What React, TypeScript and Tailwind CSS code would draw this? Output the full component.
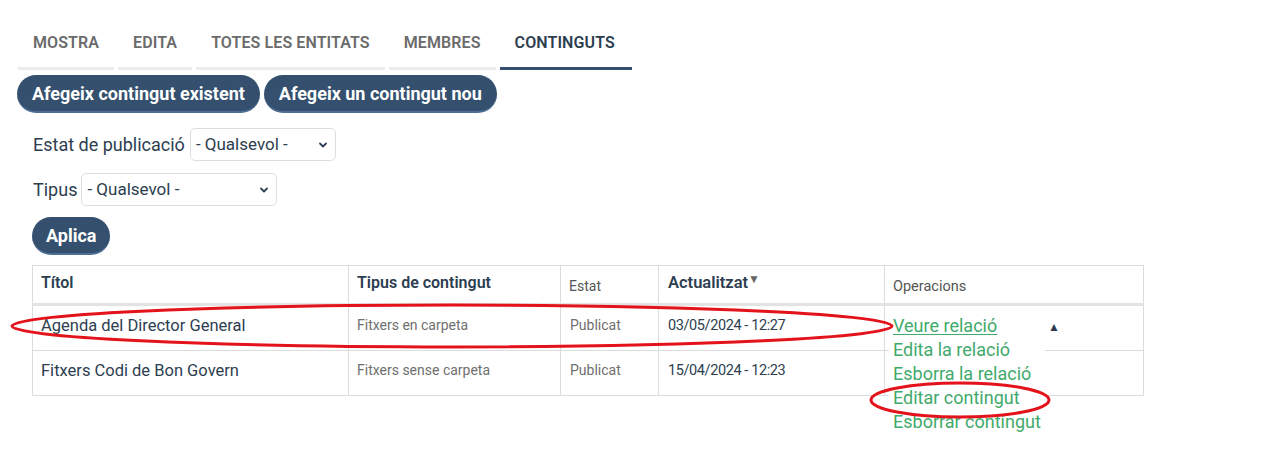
import React from "react";

const tabs = ["MOSTRA", "EDITA", "TOTES LES ENTITATS", "MEMBRES", "CONTINGUTS"];

function Chevron() {
  return (
    <svg width="10" height="10" viewBox="0 0 10 10" className="shrink-0">
      <path d="M2 3.5 L5 6.5 L8 3.5" fill="none" stroke="#2f3f55" strokeWidth="1.8" strokeLinecap="round" strokeLinejoin="round" />
    </svg>
  );
}

function Select({ w }: { w: string }) {
  return (
    <div className={`${w} h-[33px] flex items-center justify-between rounded-[5px] border border-[#dedede] bg-white pl-[5px] pr-[7px] text-[17px] text-[#2c3e50]`}>
      <span>- Qualsevol -</span>
      <Chevron />
    </div>
  );
}

export default function App() {
  return (
    <div className="relative w-[1269px] h-[470px] bg-white overflow-hidden font-['Roboto',sans-serif] text-[#2c3e50]">
      <ul className="flex gap-[4px] pl-[18px] pt-[20px]">
        {tabs.map((t, i) => (
          <li
            key={t}
            className={`px-[15px] pt-[13px] pb-[14px] leading-[20px] text-[16px] tracking-[0.1px] font-semibold border-b-[3px] ${
              i === 4 ? "border-[#34506e] text-[#2c3e50] pr-[17px]" : "border-[#ececec] text-[#6b6b6b]"
            }`}
          >
            {t}
          </li>
        ))}
      </ul>

      <div className="flex gap-[4px] pl-[17px] mt-[5px]">
        <button className="h-[38px] rounded-full bg-[#34506e] border-b-2 border-[#4d6e95] px-[15px] text-[18px] font-bold text-white">
          Afegeix contingut existent
        </button>
        <button className="h-[38px] rounded-full bg-[#34506e] border-b-2 border-[#4d6e95] px-[15px] text-[18px] font-bold text-white">
          Afegeix un contingut nou
        </button>
      </div>

      <div className="pl-[32px] pt-[15px]">
        <div className="flex items-center gap-[5px] text-[18px]">
          <span className="pl-[1px]">Estat de publicació</span>
          <Select w="w-[146px]" />
        </div>
        <div className="flex items-center gap-[4px] text-[18px] mt-[12px]">
          <span className="pl-[1px]">Tipus</span>
          <Select w="w-[196px]" />
        </div>
        <button className="mt-[11px] h-[38px] rounded-full bg-[#34506e] border-b-2 border-[#4d6e95] px-[14px] text-[18px] font-bold text-white">
          Aplica
        </button>

        <table className="mt-[10px] border-collapse border border-[#dcdcdc] text-left">
          <colgroup>
            <col className="w-[316px]" />
            <col className="w-[212px]" />
            <col className="w-[98px]" />
            <col className="w-[226px]" />
            <col className="w-[259px]" />
          </colgroup>
          <thead>
            <tr className="h-[39px] border-b-[3px] border-[#e3e3e3]">
              <th className="border-r border-[#dcdcdc] pl-[8px] pb-[3px] text-[16px] font-semibold">Títol</th>
              <th className="border-r border-[#dcdcdc] pl-[8px] pb-[3px] text-[16px] font-semibold">Tipus de contingut</th>
              <th className="border-r border-[#dcdcdc] pl-[8px] pt-[4px] text-[14px] font-normal text-[#555]">Estat</th>
              <th className="border-r border-[#dcdcdc] pl-[9px] pb-[3px] text-[16.5px] font-semibold">
                Actualitzat<span className="text-[12px] text-[#666] align-top relative top-[-1px]">▼</span>
              </th>
              <th className="pl-[8px] pt-[4px] text-[14.5px] font-normal text-[#555]">Operacions</th>
            </tr>
          </thead>
          <tbody>
            <tr className="h-[46px] border-b border-[#dcdcdc]">
              <td className="border-r border-[#dcdcdc] pl-[8px] text-[16.5px] align-top pt-[8px]">Agenda del Director General</td>
              <td className="border-r border-[#dcdcdc] pl-[8px] text-[14px] text-[#6f6f6f] align-top pt-[9px]">Fitxers en carpeta</td>
              <td className="border-r border-[#dcdcdc] pl-[9px] text-[14px] text-[#6f6f6f] align-top pt-[9px]">Publicat</td>
              <td className="border-r border-[#dcdcdc] pl-[9px] text-[14.5px] tracking-[-0.4px] align-top pt-[9px]">03/05/2024 - 12:27</td>
              <td className="relative pl-[8px] align-top pt-[8px] text-[18px] leading-[24px] text-[#3faa6b]">
                <span className="underline underline-offset-2 decoration-1">Veure relació</span>
                <span className="absolute left-[163px] top-[13px] text-[12px] leading-[16px] text-[#2c3e50]">▲</span>
                <ul className="absolute left-[4px] top-[32px] w-max bg-white pl-[4px] pr-[4px] leading-[24px] z-10">
                  <li>Edita la relació</li>
                  <li>Esborra la relació</li>
                  <li>Editar contingut</li>
                  <li>Esborrar contingut</li>
                </ul>
              </td>
            </tr>
            <tr className="h-[45px]">
              <td className="border-r border-[#dcdcdc] pl-[8px] text-[16.5px] align-top pt-[8px]">Fitxers Codi de Bon Govern</td>
              <td className="border-r border-[#dcdcdc] pl-[8px] text-[14px] text-[#6f6f6f] align-top pt-[9px]">Fitxers sense carpeta</td>
              <td className="border-r border-[#dcdcdc] pl-[9px] text-[14px] text-[#6f6f6f] align-top pt-[9px]">Publicat</td>
              <td className="border-r border-[#dcdcdc] pl-[9px] text-[14.5px] tracking-[-0.4px] align-top pt-[9px]">15/04/2024 - 12:23</td>
              <td></td>
            </tr>
          </tbody>
        </table>
      </div>

      <svg className="absolute inset-0 pointer-events-none z-20" width="1269" height="470">
        <ellipse cx="452" cy="326" rx="440" ry="21" fill="none" stroke="#e3121b" strokeWidth="3" />
        <ellipse cx="960" cy="400" rx="89" ry="17" fill="none" stroke="#e3121b" strokeWidth="3" />
      </svg>
    </div>
  );
}
